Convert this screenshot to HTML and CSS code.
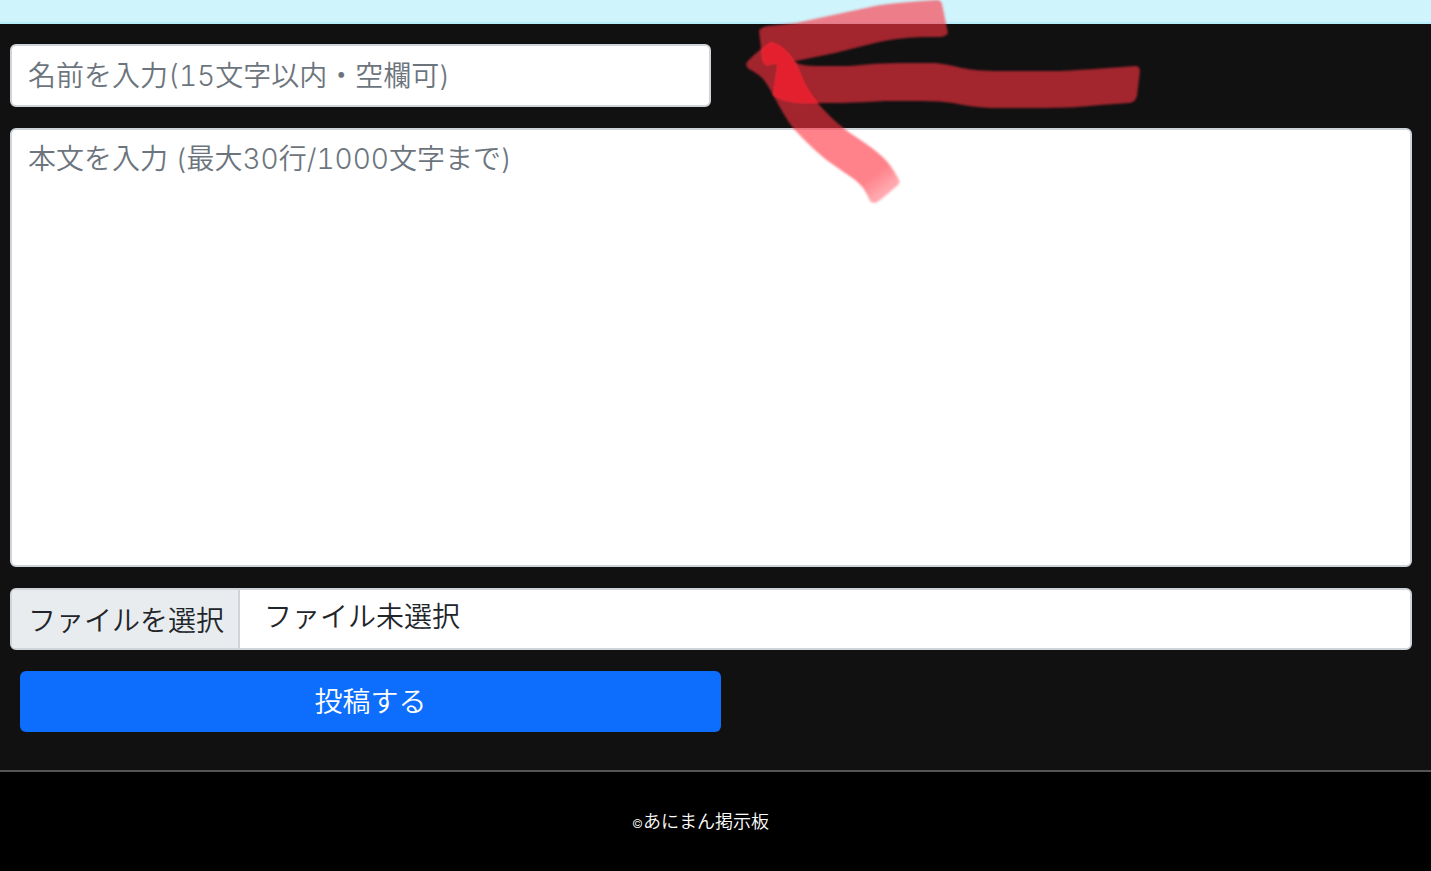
FILE: index.html
```html
<!DOCTYPE html>
<html lang="ja">
<head>
    <meta charset="UTF-8">
    <meta name="viewport" content="width=device-width, initial-scale=1.0">
    <title>あにまん掲示板</title>
    <link rel="stylesheet" href="styles.css">
</head>
<body>
    <div class="notice"></div>
    <form class="post-form">
        <input type="text" class="form-control name" name="name" maxlength="15" aria-label="名前" placeholder="名前を入力(15文字以内・空欄可)">
        <textarea class="form-control message" name="message" maxlength="1000" aria-label="本文" placeholder="本文を入力 (最大30行/1000文字まで)"></textarea>
        <label class="form-control file" for="image">
            <input type="file" id="image" name="image" class="file-input">
            <span class="file-button">ファイルを選択</span>
            <span class="file-name">ファイル未選択</span>
        </label>
        <button type="submit" class="submit">投稿する</button>
    </form>
    <footer class="footer">
        <small><span class="copy">©</span>あにまん掲示板</small>
    </footer>

    <!-- hand-drawn arrow -->
    <svg class="arrow" width="430" height="220" viewBox="0 0 430 220" aria-hidden="true">
        <defs>
            <filter id="soft"><feGaussianBlur stdDeviation="0.8"/></filter>
            <linearGradient id="tail" gradientUnits="userSpaceOnUse" x1="135" y1="160" x2="162" y2="195">
                <stop offset="0.4" stop-color="#ff3240" stop-opacity="0.61"/>
                <stop offset="1" stop-color="#ff3240" stop-opacity="0.35"/>
            </linearGradient>
        </defs>
        <g fill="#ff3240" fill-opacity="0.61" filter="url(#soft)">
            <path d="M29 31 Q30 27 38 26 L66 23 L145 6 Q160 3 207 0 Q211 0 212 4 L218 33 Q217 36 210 37 L192 37 Q165 38 145 43 L105 53 L66 61 L36 65 Q33 64 32 58 L31 48 Z"/>
            <path d="M48 62 L64 62 Q72 66 85 66 L120 66 Q145 63 170 63 L205 63 Q217 64 232 68 Q246 71 266 71 L330 71 Q355 70 405 66 Q410 66 410 71 L407 96 Q405 103 399 103 L370 105 Q345 108 315 108 L260 108 Q240 107 223 103 Q210 101 192 101 L155 101 Q120 103 100 103 L67 103 Q50 101 43 95 Z"/>
            <path fill="url(#tail)" fill-opacity="1" d="M41 42 Q55 46 66 63 C74 82 79 95 94 110 Q106 123 120 133 C142 148 157 156 168 178 Q171 182 168 185 Q158 194 149 201 Q144 205 140 201 C133 183 125 180 108 168 C91 157 78 144 64 129 C53 116 44 94 34 80 Q30 75 19 69 Q14 65 18 61 Q27 51 41 42 Z"/>
        </g>
        <g fill="#e6202c" fill-opacity="0.9" filter="url(#soft)">
            <path d="M41 42 Q55 46 64 61 L36 65 Q33 61 32 49 Z"/>
            <path d="M48 62 L65 62 C74 82 77 91 89 103 Q57 104 43 95 Z"/>
        </g>
    </svg>
</body>
</html>
```
FILE: styles.css
```css
* {
    box-sizing: border-box;
}

body {
    margin: 0;
    min-height: 100vh;
    display: flex;
    flex-direction: column;
    position: relative;
    background-color: #111;
    font-family: Inter, "Noto Sans CJK JP", sans-serif;
    font-weight: 350;
    font-size: 28px;
    line-height: 42px;
    color: #212529;
}

.notice {
    height: 24px;
    background-color: #cff4fc;
    border-bottom: 2px solid #b6effb;
}

.post-form {
    display: flex;
    flex-direction: column;
    gap: 21px;
    padding: 20px 19px 38px 10px;
}

.form-control {
    display: block;
    width: 100%;
    margin: 0;
    padding: 8px 16px;
    font: inherit;
    font-variant-numeric: tabular-nums;
    color: #212529;
    background-color: #fff;
    border: 2px solid #ced4da;
    border-radius: 6px;
}

.form-control::placeholder {
    color: #6c757d;
    opacity: 1;
}

.name {
    width: 50%;
    height: 63px;
}

.message {
    height: 439px;
    resize: none;
}

.file {
    display: flex;
    height: 62px;
    padding: 0;
    overflow: hidden;
    position: relative;
    cursor: pointer;
}

.file-input {
    position: absolute;
    width: 1px;
    height: 1px;
    opacity: 0;
}

.file-button {
    padding: 10px 14px 8px 16px;
    background-color: #e9ecef;
    border-right: 2px solid #ced4da;
}

.file-name {
    padding: 6px 24px;
}

.submit {
    width: 50%;
    height: 61px;
    margin-left: 10px;
    padding: 8px 16px;
    font: inherit;
    color: #fff;
    background-color: #0d6efd;
    border: none;
    border-radius: 6px;
    cursor: pointer;
}

.footer {
    flex: 1;
    padding: 25px 30px 28px 0;
    background-color: #000;
    border-top: 2px solid #555;
    color: #fff;
    text-align: center;
}

.footer small {
    font-size: 18px;
}

.copy {
    font-size: 12px;
}

.arrow {
    position: absolute;
    top: 0;
    left: 730px;
    pointer-events: none;
}
```
